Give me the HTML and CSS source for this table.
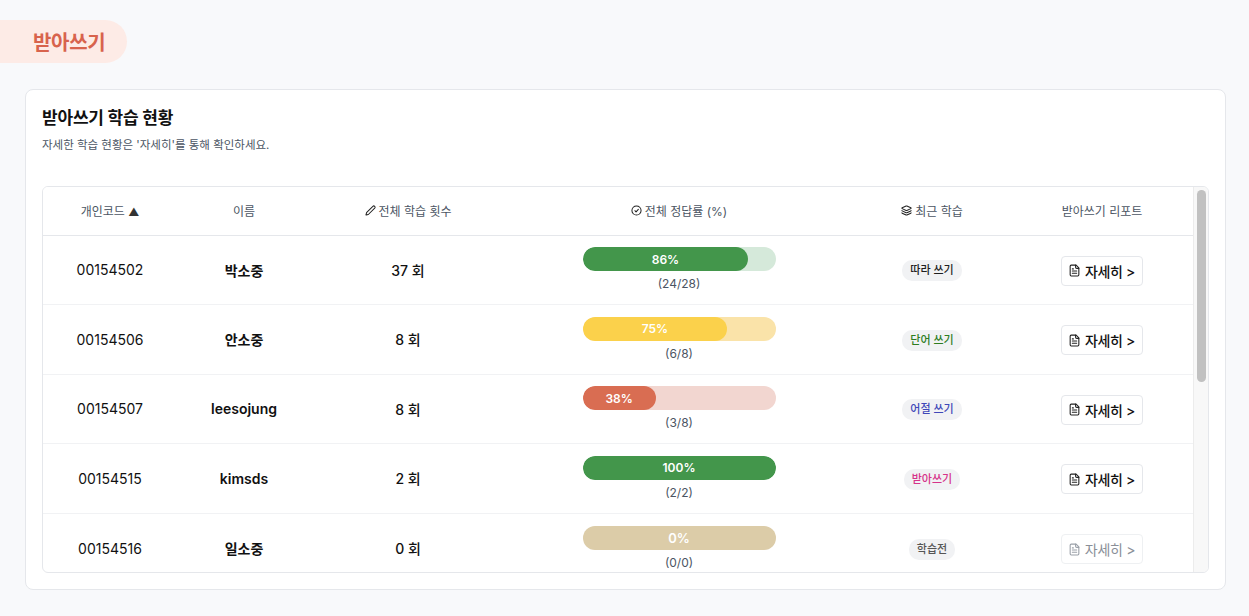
FILE: index.html
```html
<!DOCTYPE html>
<html lang="ko">
<head>
<meta charset="utf-8">
<title>받아쓰기</title>
<link rel="stylesheet" href="styles.css">
</head>
<body>
<div class="page">
  <div class="pill">받아쓰기</div>
  <section class="card">
    <h1 class="card-title">받아쓰기 학습 현황</h1>
    <p class="card-sub">자세한 학습 현황은 '자세히'를 통해 확인하세요.</p>
    <div class="table-wrap">
      <div class="table-area">
      <table class="tbl">
        <colgroup>
          <col class="c1"><col class="c2"><col class="c3"><col class="c4"><col class="c5"><col class="c6">
        </colgroup>
        <thead>
          <tr>
            <th>개인코드 <span class="sort">▲</span></th>
            <th>이름</th>
            <th><span class="th-in"><svg class="hico" viewBox="0 0 24 24"><path d="M21.17 6.81a2.82 2.82 0 0 0-3.98-3.99L3.84 16.17a2 2 0 0 0-.5.83l-1.32 4.35a.5.5 0 0 0 .62.62l4.350-1.32a2 2 0 0 0 .83-.5z"/></svg>전체 학습 횟수</span></th>
            <th><span class="th-in"><svg class="hico" viewBox="0 0 24 24"><circle cx="12" cy="12" r="10"/><path d="m8.5 12.5 2.5 2.5 5-5.5"/></svg>전체 정답률 (%)</span></th>
            <th><span class="th-in"><svg class="hico" viewBox="0 0 24 24"><path d="M12.83 2.18a2 2 0 0 0-1.66 0L2.6 6.08a1 1 0 0 0 0 1.83l8.58 3.910a2 2 0 0 0 1.66 0l8.58-3.9a1 1 0 0 0 0-1.83z"/><path d="M2 12a1 1 0 0 0 .58.91l8.6 3.91a2 2 0 0 0 1.65 0l8.58-3.9A1 1 0 0 0 22 12"/><path d="M2 17a1 1 0 0 0 .58.91l8.6 3.91a2 2 0 0 0 1.65 0l8.58-3.9A1 1 0 0 0 22 17"/></svg>최근 학습</span></th>
            <th>받아쓰기 리포트</th>
          </tr>
        </thead>
        <tbody>
          <tr>
            <td class="code">00154502</td>
            <td class="name">박소중</td>
            <td class="count">37 회</td>
            <td><div class="prog"><div class="bar track-green"><div class="fill fill-green" style="width:86%">86%</div></div><div class="frac">(24/28)</div></div></td>
            <td><span class="badge b-dark">따라 쓰기</span></td>
            <td><button class="btn"><svg class="dico" viewBox="0 0 24 24"><path d="M15 2H6a2 2 0 0 0-2 2v16a2 2 0 0 0 2 2h12a2 2 0 0 0 2-2V7Z"/><path d="M14 2v4a2 2 0 0 0 2 2h4"/><path d="M10 9H8"/><path d="M16 13H8"/><path d="M16 17H8"/></svg>자세히 &gt;</button></td>
          </tr>
          <tr>
            <td class="code">00154506</td>
            <td class="name">안소중</td>
            <td class="count">8 회</td>
            <td><div class="prog"><div class="bar track-yellow"><div class="fill fill-yellow" style="width:75%">75%</div></div><div class="frac">(6/8)</div></div></td>
            <td><span class="badge b-green">단어 쓰기</span></td>
            <td><button class="btn"><svg class="dico" viewBox="0 0 24 24"><path d="M15 2H6a2 2 0 0 0-2 2v16a2 2 0 0 0 2 2h12a2 2 0 0 0 2-2V7Z"/><path d="M14 2v4a2 2 0 0 0 2 2h4"/><path d="M10 9H8"/><path d="M16 13H8"/><path d="M16 17H8"/></svg>자세히 &gt;</button></td>
          </tr>
          <tr>
            <td class="code">00154507</td>
            <td class="name">leesojung</td>
            <td class="count">8 회</td>
            <td><div class="prog"><div class="bar track-red"><div class="fill fill-red" style="width:38%">38%</div></div><div class="frac">(3/8)</div></div></td>
            <td><span class="badge b-blue">어절 쓰기</span></td>
            <td><button class="btn"><svg class="dico" viewBox="0 0 24 24"><path d="M15 2H6a2 2 0 0 0-2 2v16a2 2 0 0 0 2 2h12a2 2 0 0 0 2-2V7Z"/><path d="M14 2v4a2 2 0 0 0 2 2h4"/><path d="M10 9H8"/><path d="M16 13H8"/><path d="M16 17H8"/></svg>자세히 &gt;</button></td>
          </tr>
          <tr>
            <td class="code">00154515</td>
            <td class="name">kimsds</td>
            <td class="count">2 회</td>
            <td><div class="prog"><div class="bar track-green"><div class="fill fill-green" style="width:100%">100%</div></div><div class="frac">(2/2)</div></div></td>
            <td><span class="badge b-pink">받아쓰기</span></td>
            <td><button class="btn"><svg class="dico" viewBox="0 0 24 24"><path d="M15 2H6a2 2 0 0 0-2 2v16a2 2 0 0 0 2 2h12a2 2 0 0 0 2-2V7Z"/><path d="M14 2v4a2 2 0 0 0 2 2h4"/><path d="M10 9H8"/><path d="M16 13H8"/><path d="M16 17H8"/></svg>자세히 &gt;</button></td>
          </tr>
          <tr class="last">
            <td class="code">00154516</td>
            <td class="name">일소중</td>
            <td class="count">0 회</td>
            <td><div class="prog"><div class="bar track-tan"><div class="zero">0%</div></div><div class="frac">(0/0)</div></div></td>
            <td><span class="badge b-grey">학습전</span></td>
            <td><button class="btn btn-off"><svg class="dico" viewBox="0 0 24 24"><path d="M15 2H6a2 2 0 0 0-2 2v16a2 2 0 0 0 2 2h12a2 2 0 0 0 2-2V7Z"/><path d="M14 2v4a2 2 0 0 0 2 2h4"/><path d="M10 9H8"/><path d="M16 13H8"/><path d="M16 17H8"/></svg>자세히 &gt;</button></td>
          </tr>
        </tbody>
      </table>
      </div>
      <div class="sbar"><div class="sbar-thumb"></div></div>
    </div>
  </section>
</div>
</body>
</html>
```

FILE: styles.css
```css
* { box-sizing: border-box; }
html, body { margin: 0; padding: 0; }
body {
  background: #f8f9fb;
  font-family: "Inter", "Noto Sans CJK KR", "Noto Sans", sans-serif;
  color: #111;
  height: 616px;
  overflow: hidden;
}
.page {
  padding: 20px 23px 0 25px;
}
.pill {
  display: inline-flex;
  align-items: center;
  height: 43px;
  margin-left: -25px;
  padding: 0 22px 0 33px;
  background: #fdebe6;
  color: #d8634d;
  font-size: 20px;
  font-weight: 600;
  border-radius: 0 22px 22px 0;
  letter-spacing: -0.3px;
}
.card {
  margin-top: 26px;
  background: #fff;
  border: 1px solid #e5e7eb;
  border-radius: 8px;
  padding: 16px 16px 15px 16px;
  height: 501px;
}
.card-title {
  margin: 0;
  font-size: 17px;
  line-height: 24px;
  font-weight: 700;
  color: #111;
  letter-spacing: -0.2px;
}
.card-sub {
  margin: 7px 0 0;
  font-size: 11.5px;
  line-height: 16px;
  color: #4b5563;
}
.table-wrap {
  margin-top: 33px;
  border: 1px solid #e5e7eb;
  border-radius: 6px;
  height: 387px;
  overflow: hidden;
  display: flex;
}
.table-area {
  flex: 1;
  min-width: 0;
  overflow: hidden;
}
.sbar {
  flex: none;
  width: 15px;
  background: #f8f8f8;
  border-left: 1px solid #ececec;
  padding: 3px 2px 0 3px;
}
.sbar-thumb {
  height: 192px;
  background: #c1c1c1;
  border-radius: 5px;
}
.tbl {
  width: 100%;
  border-collapse: collapse;
  table-layout: fixed;
}
.c1 { width: 134px; }
.c2 { width: 134px; }
.c3 { width: 194px; }
.c4 { width: 348px; }
.c5 { width: 158px; }
.c6 { width: auto; }
.tbl th {
  height: 48px;
  font-size: 12px;
  font-weight: 400;
  color: #4b5563;
  text-align: center;
  border-bottom: 1px solid #e5e7eb;
  background: #fff;
}
.sort { font-size: 11px; color: #333; }
.th-in {
  display: inline-flex;
  align-items: center;
  gap: 3px;
}
.hico {
  width: 11px;
  height: 11px;
  fill: none;
  stroke: #222;
  stroke-width: 2.2;
  stroke-linecap: round;
  stroke-linejoin: round;
}
.tbl td {
  height: 69.5px;
  text-align: center;
  border-bottom: 1px solid #f1f2f4;
  font-size: 14px;
  padding: 0;
}
.tbl tr.last td { border-bottom: none; }
.code { font-weight: 400; }
.name { font-weight: 600; }
.count { font-weight: 500; }
.prog {
  width: 193px;
  margin: 0 auto;
  display: flex;
  flex-direction: column;
  align-items: center;
  gap: 4px;
  padding-top: 1px;
}
.bar {
  width: 100%;
  height: 24px;
  border-radius: 12px;
  overflow: hidden;
  display: flex;
}
.fill {
  height: 100%;
  border-radius: 12px;
  color: #fff;
  font-size: 12px;
  font-weight: 600;
  display: flex;
  align-items: center;
  justify-content: center;
}
.zero {
  width: 100%;
  color: #fff;
  font-size: 13px;
  font-weight: 600;
  display: flex;
  align-items: center;
  justify-content: center;
}
.track-green { background: #d5e9da; }
.fill-green { background: #43964b; }
.track-yellow { background: #fae3a9; }
.fill-yellow { background: #fbd14b; }
.track-red { background: #f2d6d0; }
.fill-red { background: #d96d52; }
.track-tan { background: #dccca8; }
.frac {
  font-size: 12px;
  line-height: 18px;
  color: #4b5563;
}
.badge {
  display: inline-block;
  padding: 3px 8px;
  border-radius: 10px;
  background: #f1f2f4;
  font-size: 11px;
  line-height: 15px;
  font-weight: 500;
  position: relative;
  top: 1px;
}
.b-dark { color: #1f1f1f; }
.b-green { color: #2e7d1f; }
.b-blue { color: #3f48b8; }
.b-pink { color: #d6338a; }
.b-grey { color: #555; }
.btn {
  display: inline-flex;
  align-items: center;
  gap: 4px;
  height: 30px;
  padding: 0 7px 0 6px;
  border: 1px solid #e5e7eb;
  border-radius: 4px;
  background: #fff;
  font-family: inherit;
  font-size: 14px;
  font-weight: 500;
  color: #111;
  position: relative;
  top: 1px;
  letter-spacing: -0.3px;
}
.dico {
  width: 13px;
  height: 13px;
  fill: none;
  stroke: #222;
  stroke-width: 2;
  stroke-linecap: round;
  stroke-linejoin: round;
}
.btn-off { color: #8a8f98; border-color: #eef0f2; font-weight: 400; }
.btn-off .dico { stroke: #9aa0a8; }
```
